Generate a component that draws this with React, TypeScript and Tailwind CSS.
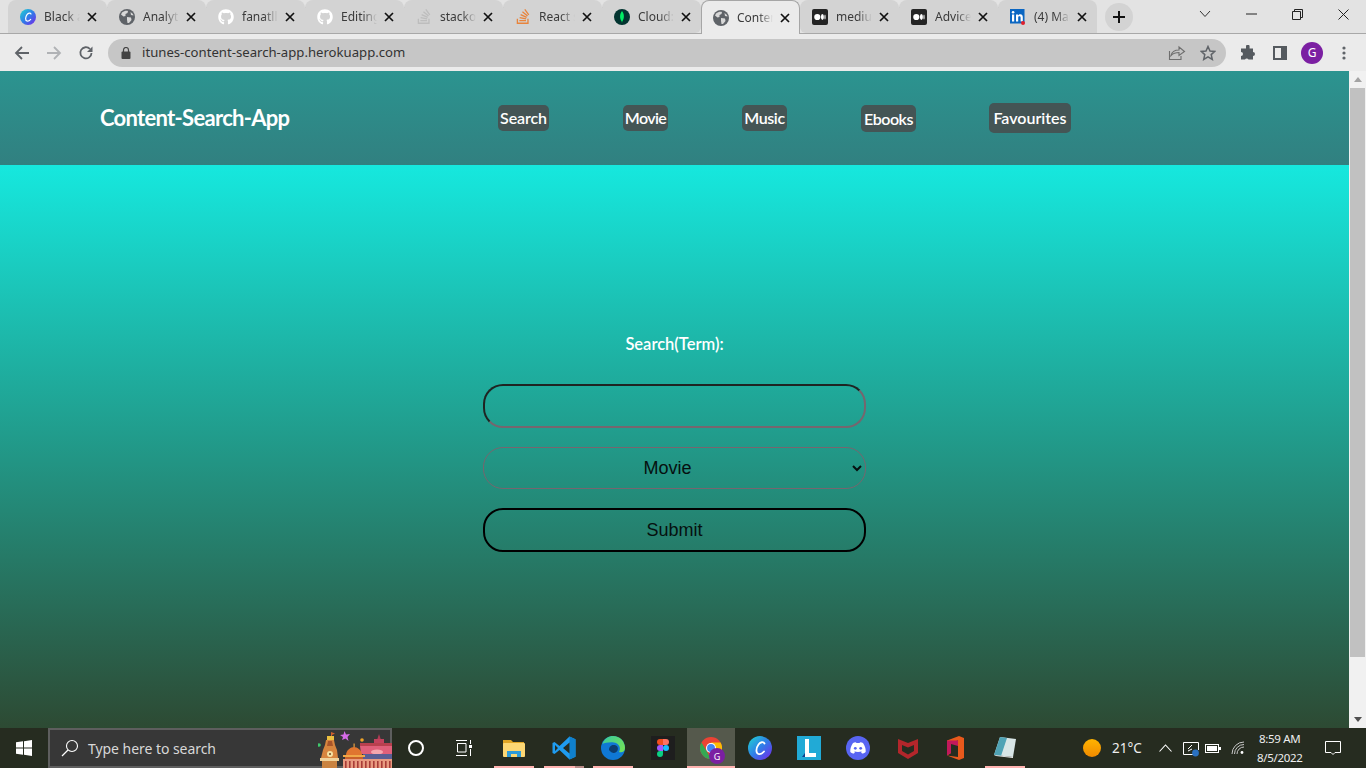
import React from "react";
import { FaGithub, FaStackOverflow } from "react-icons/fa";

const Globe = () => (
  <svg width="16" height="16" viewBox="0 0 16 16">
    <circle cx="8" cy="8" r="8" fill="#5f6368" />
    <path d="M3 3.5 C5 2 7 1.5 9 2 L8.5 4 L6.5 5 L6.5 7 L4.5 7.5 L2 5.5 Z" fill="#d8d8d8" />
    <path d="M8 8 L12 8.5 L12.5 11 L10 14 L8.5 14 L8 11 Z" fill="#d8d8d8" />
    <path d="M11.5 3 L14 5 L14.5 6.5 L12 6 Z" fill="#d8d8d8" />
  </svg>
);

const Canva = ({ size = 16, id = "cv" }: { size?: number; id?: string }) => (
  <svg width={size} height={size} viewBox="0 0 24 24">
    <defs>
      <linearGradient id={id} x1="0" y1="0" x2="1" y2="1">
        <stop offset="0" stopColor="#1fd8d0" />
        <stop offset="0.5" stopColor="#2f7de8" />
        <stop offset="1" stopColor="#7a22e8" />
      </linearGradient>
    </defs>
    <circle cx="12" cy="12" r="12" fill={`url(#${id})`} />
    <path d="M16.5 7.5 C15.5 5.5 12.5 5.8 10.5 8.5 C8 12 7.5 17 10.5 18 C12.5 18.6 14.5 17.2 16 15.5" fill="none" stroke="#fff" strokeWidth="1.8" strokeLinecap="round" />
  </svg>
);

const Github = () => <FaGithub size={16} color="#ffffff" />;
const So = ({ c }: { c: string }) => <FaStackOverflow size={17} color={c} />;

const Mongo = () => (
  <svg width="16" height="16" viewBox="0 0 16 16">
    <circle cx="8" cy="8" r="8" fill="#023430" />
    <path d="M8 2 C10.5 5 10.5 9.5 8.3 12.5 L8 14 L7.7 12.5 C5.5 9.5 5.5 5 8 2 Z" fill="#00ed64" />
  </svg>
);

const Medium = () => (
  <svg width="16" height="16" viewBox="0 0 16 16">
    <rect width="16" height="16" rx="2" fill="#242424" />
    <circle cx="5.3" cy="8" r="3.1" fill="#fff" />
    <ellipse cx="10.4" cy="8" rx="1.5" ry="2.9" fill="#fff" />
    <ellipse cx="13" cy="8" rx="0.6" ry="2.6" fill="#fff" />
  </svg>
);

const Linked = () => (
  <svg width="16" height="16" viewBox="0 0 16 16">
    <rect width="14.5" height="14.5" fill="#0a66c2" />
    <rect x="2" y="5.5" width="2.2" height="7" fill="#fff" />
    <circle cx="3.1" cy="3.2" r="1.3" fill="#fff" />
    <path d="M6 5.5 H8 V6.5 C8.5 5.6 9.4 5.3 10.3 5.3 C12 5.3 12.8 6.4 12.8 8.2 V12.5 H10.6 V8.7 C10.6 7.8 10.2 7.3 9.4 7.3 C8.7 7.3 8.2 7.8 8.2 8.7 V12.5 H6 Z" fill="#fff" />
    <circle cx="13" cy="14" r="2" fill="#e0202c" />
  </svg>
);

const tabs = [
  { icon: <Canva />, text: "Black and", sep: true },
  { icon: <Globe />, text: "Analytics", sep: true },
  { icon: <Github />, text: "fanatllll", sep: true },
  { icon: <Github />, text: "Editing", sep: true },
  { icon: <So c="#bdbdbd" />, text: "stackover", sep: true },
  { icon: <So c="#e8843c" />, text: "React st", sep: true },
  { icon: <Mongo />, text: "Cloud:", sep: false, br: true },
  { icon: <Globe />, text: "Content", sep: false, active: true },
  { icon: <Medium />, text: "medium", sep: true, bl: true },
  { icon: <Medium />, text: "Advice", sep: true },
  { icon: <Linked />, text: "(4) Mail", sep: false },
];

const CloseX = () => (
  <svg width="10" height="10" viewBox="0 0 10 10" className="shrink-0">
    <path d="M1 1 L9 9 M9 1 L1 9" stroke="#111" strokeWidth="1.7" />
  </svg>
);

function Tab({ t }: { t: (typeof tabs)[number] }) {
  return (
    <div
      className={
        "relative flex w-[99px] shrink-0 items-center rounded-t-[8px] " +
        (t.active
          ? "h-[34px] -mb-px self-start bg-[#ebebeb] border border-b-0 border-[#a6a6a6] pl-[11px] z-10 "
          : "h-[33px] bg-[#d3d3d3] pl-[12px] ") +
        (t.br ? "rounded-br-[6px] " : "") +
        (t.bl ? "rounded-bl-[6px] " : "")
      }
    >
      <span className="flex h-[17px] w-[16px] shrink-0 items-center justify-center">{t.icon}</span>
      <span className="ml-[8px] w-[36px] overflow-hidden whitespace-nowrap text-[12px] text-[#3a3a3a] [mask-image:linear-gradient(to_right,black_60%,transparent)]">
        {t.text}
      </span>
      <span className="ml-[7px] flex">
        <CloseX />
      </span>
      {t.sep && <span className="absolute right-[-1px] top-[7px] h-[20px] w-px bg-[#8c8c8c]" />}
    </div>
  );
}

function TabStrip() {
  return (
    <div className="flex h-[34px] shrink-0 items-start border-b border-[#a8a8a8] bg-[#e3e3e3] pl-[8px]">
      {tabs.map((t) => (
        <Tab key={t.text} t={t} />
      ))}
      <div className="ml-[8px] mt-[3px] flex h-[28px] w-[28px] items-center justify-center rounded-full bg-[#d3d3d3]">
        <svg width="14" height="14" viewBox="0 0 14 14">
          <path d="M7 1 V13 M1 7 H13" stroke="#111" strokeWidth="2" />
        </svg>
      </div>
      <div className="ml-auto flex h-[28px] items-center">
        <span className="flex w-[46px] justify-center">
          <svg width="12" height="8" viewBox="0 0 12 8"><path d="M1 1 L6 6.5 L11 1" fill="none" stroke="#333" /></svg>
        </span>
        <span className="flex w-[46px] justify-center">
          <svg width="11" height="2" viewBox="0 0 11 2"><path d="M0 1 H11" stroke="#222" /></svg>
        </span>
        <span className="flex w-[46px] justify-center">
          <svg width="11" height="11" viewBox="0 0 11 11"><path d="M.5 2.5 H8.5 V10.5 H.5 Z M2.5 2.5 V.5 H10.5 V8.5 H8.5" fill="none" stroke="#222" /></svg>
        </span>
        <span className="flex w-[46px] justify-center">
          <svg width="11" height="11" viewBox="0 0 11 11"><path d="M.5 .5 L10.5 10.5 M10.5 .5 L.5 10.5" stroke="#222" /></svg>
        </span>
      </div>
    </div>
  );
}

function Toolbar() {
  return (
    <div className="flex h-[37px] shrink-0 items-center bg-[#ebebeb]">
      <div className="flex w-[108px] items-center pl-[14px]">
        <svg width="16" height="16" viewBox="0 0 16 16" className="mr-[16px]">
          <path d="M15 8 H2 M8 2 L2 8 L8 14" fill="none" stroke="#5f6368" strokeWidth="1.8" />
        </svg>
        <svg width="16" height="16" viewBox="0 0 16 16" className="mr-[16px]">
          <path d="M1 8 H14 M8 2 L14 8 L8 14" fill="none" stroke="#b0b2b5" strokeWidth="1.8" />
        </svg>
        <svg width="16" height="16" viewBox="0 0 16 16">
          <path d="M13.5 8 A5.6 5.6 0 1 1 12 4" fill="none" stroke="#5f6368" strokeWidth="1.8" />
          <path d="M14.5 1.5 V7 H9 Z" fill="#5f6368" />
        </svg>
      </div>
      <div className="flex h-[28px] w-[1118px] items-center rounded-full bg-[#c6c6c6] pl-[13px] pr-[10px]">
        <svg width="10" height="12" viewBox="0 0 10 12" className="shrink-0">
          <rect x="0.5" y="4.5" width="9" height="7.5" rx="1" fill="#444" />
          <path d="M2.5 5 V3 A2.5 2.5 0 0 1 7.5 3 V5" fill="none" stroke="#444" strokeWidth="1.2" />
        </svg>
        <span className="ml-[11px] text-[13.15px] text-[#333]">itunes-content-search-app.herokuapp.com</span>
        <svg width="18" height="16" viewBox="0 0 18 16" className="ml-auto mr-[14px]">
          <path d="M1.5 6 V14.5 H13 V11 M3 10.5 C4 6.5 7 5 11 5 V2 L16.5 6.5 L11 10.5 V7.5 C7.5 7.5 5 8.5 3 10.5 Z" fill="none" stroke="#6e6e6e" strokeWidth="1.1" />
        </svg>
        <svg width="16" height="16" viewBox="0 0 16 16">
          <path d="M8 1.5 L10 6 L14.8 6.4 L11.2 9.6 L12.3 14.4 L8 11.9 L3.7 14.4 L4.8 9.6 L1.2 6.4 L6 6 Z" fill="none" stroke="#5f6368" strokeWidth="1.5" />
        </svg>
      </div>
      <div className="flex items-center pl-[14px]">
        <svg width="16" height="16" viewBox="0 0 16 16" className="mr-[17px]">
          <path d="M6 1.5 A1.8 1.8 0 0 1 9.6 1.5 V3.5 H13 V7 A2 2 0 0 1 13 11 V14.5 H8.5 A2 2 0 0 0 5 14.5 H1 V11 A2 2 0 0 0 1 7 V3.5 H6 Z" fill="#555a5f" />
        </svg>
        <svg width="14" height="14" viewBox="0 0 14 14" className="mr-[14px]">
          <rect x="1" y="1" width="12" height="12" fill="none" stroke="#555a5f" strokeWidth="2" />
          <rect x="8" y="1" width="5" height="12" fill="#555a5f" />
        </svg>
        <span className="flex h-[22px] w-[22px] items-center justify-center rounded-full bg-[#7b1fa2] text-[12px] text-white">G</span>
        <svg width="4" height="14" viewBox="0 0 4 14" className="ml-[19px]">
          <circle cx="2" cy="2" r="1.6" fill="#5f6368" />
          <circle cx="2" cy="7" r="1.6" fill="#5f6368" />
          <circle cx="2" cy="12" r="1.6" fill="#5f6368" />
        </svg>
      </div>
    </div>
  );
}

const navBtn =
  "flex items-center justify-center rounded-[5px] bg-[#445555] text-[16px] font-semibold leading-none text-white [font-family:Lato,sans-serif]";

function Page() {
  return (
    <div className="flex min-w-0 flex-1 flex-col">
      <header className="flex h-[94px] shrink-0 items-center bg-[linear-gradient(180deg,#2b9490,#318080)] pl-[100px]">
        <div className="-mt-[2px] w-[398px] shrink-0 text-[22px] font-bold tracking-[-0.7px] text-white [font-family:Lato,sans-serif]">
          Content-Search-App
        </div>
        <nav className="flex items-center gap-[74px]">
          <a className={navBtn + " h-[26px] w-[51px] tracking-[-0.1px]"}>Search</a>
          <a className={navBtn + " h-[26px] w-[45px] tracking-[-0.6px]"}>Movie</a>
          <a className={navBtn + " h-[26px] w-[45px] tracking-[-0.4px]"}>Music</a>
          <a className={navBtn + " mt-px h-[27px] w-[55px] tracking-[-0.5px]"}>Ebooks</a>
          <a className={navBtn + " -ml-px h-[30px] w-[82px]"}>Favourites</a>
        </nav>
      </header>
      <main className="flex flex-1 flex-col items-center bg-[linear-gradient(180deg,#16e8de,#2d4a33)] pt-[169px]">
        <label className="h-[20px] text-[16.5px] font-semibold leading-[20px] text-white [font-family:Lato,sans-serif]">
          Search(Term):
        </label>
        <form className="mt-[30px] flex w-[383px] flex-col [font-family:'Liberation_Sans',sans-serif]">
          <input
            type="text"
            className="h-[44px] w-full rounded-[20px] border-2 border-t-[#1f2422] border-l-[#1f2422] border-r-[#76666e] border-b-[#76666e] bg-transparent text-center text-[18px] text-black outline-none"
          />
          <select
            defaultValue="Movie"
            className="mt-[19px] h-[42px] w-full rounded-[20px] border border-[#76666e] bg-transparent pr-[2px] text-center text-[18px] text-[#06100f] outline-none"
          >
            <option>Movie</option>
            <option>Music</option>
            <option>Ebooks</option>
          </select>
          <button
            type="button"
            className="mt-[19px] h-[44px] w-full rounded-[20px] border-2 border-black bg-transparent text-[18px] text-[#06100f]"
          >
            Submit
          </button>
        </form>
      </main>
    </div>
  );
}

function Scrollbar() {
  return (
    <div className="flex w-[17px] shrink-0 flex-col items-center bg-[#f1f1f1]">
      <div className="flex h-[17px] w-full items-center justify-center">
        <svg width="8" height="5" viewBox="0 0 8 5"><path d="M4 0 L8 5 H0 Z" fill="#a3a3a3" /></svg>
      </div>
      <div className="h-[569px] w-[15px] bg-[#c1c1c1]" />
      <div className="mt-auto flex h-[17px] w-full items-center justify-center">
        <svg width="8" height="5" viewBox="0 0 8 5"><path d="M0 0 H8 L4 5 Z" fill="#505050" /></svg>
      </div>
    </div>
  );
}

const stripes = [27, 31, 35, 39, 43, 47, 51, 55, 59, 63, 67, 71];

const Art = () => (
  <svg width="74" height="38" viewBox="0 0 74 38" className="-mr-[2px] -mb-[2px] shrink-0">
    {/* clock tower */}
    <path d="M13 2 L17 3.5 L14 5 V8 H13 Z" fill="#d0602c" />
    <rect x="9" y="6" width="7" height="4" fill="#ecc040" />
    <path d="M8 10 H16 L17 15 L19 20 L20 28 H3 L5 20 L7 15 Z" fill="#d8853e" />
    <path d="M10 11 H14 L15 16 H9 Z" fill="#a9552a" />
    <circle cx="12" cy="24" r="3" fill="#f5e2a4" />
    <circle cx="12" cy="24" r="1" fill="#6e4320" />
    <rect x="2" y="28" width="19" height="3" fill="#f0d29a" />
    <rect x="4" y="31" width="15" height="7" fill="#c98341" />
    {/* right palace */}
    <path d="M61 4 L63 10 H59 Z" fill="#b03a55" />
    <rect x="56" y="9" width="10" height="4" fill="#c2425c" />
    <rect x="42" y="13" width="32" height="3" fill="#b8404e" />
    <path d="M42 16 H74 V24 H43 Z" fill="#e0607a" />
    <ellipse cx="59" cy="22" rx="6" ry="2.6" fill="#f5a6ae" />
    <rect x="45" y="24" width="29" height="5" fill="#5a5e94" />
    {/* dome */}
    <rect x="35.5" y="13.5" width="1.2" height="4" fill="#e8a040" />
    <path d="M28 25 C28 20 33 17 36 17 C39 17 44 20 44 25 Z" fill="#e0752f" />
    <rect x="25" y="25" width="22" height="2" fill="#f0a848" />
    <rect x="27" y="27" width="18" height="2" fill="#c9602a" />
    {/* colonnade */}
    <rect x="25" y="29" width="49" height="9" fill="#e89a80" />
    {stripes.map((x) => (
      <rect key={x} x={x} y="31" width="1.6" height="7" fill="#a83c38" />
    ))}
    {/* star + dots */}
    <path d="M26.5 1 L28 4.5 L32 4 L29.5 7 L30.5 11 L27.5 8.5 L24 10 L25 7 L22 5 L25.5 4.5 Z" fill="#d66be8" />
    <circle cx="1" cy="15" r="1.8" fill="#3ecb6d" />
    <circle cx="44" cy="10" r="1.8" fill="#efa428" />
  </svg>
);

const Win = () => (
  <svg width="16" height="16" viewBox="0 0 16 16">
    <path d="M0 2.3 L7 1.3 V7.5 H0 Z M8 1.2 L16 0 V7.5 H8 Z M0 8.5 H7 V14.7 L0 13.7 Z M8 8.5 H16 V16 L8 14.8 Z" fill="#fff" />
  </svg>
);

const TB = ({ w = 49, children, active, under, under2 }: { w?: number; children: React.ReactNode; active?: boolean; under?: string; under2?: boolean }) => (
  <div className={"relative flex h-[40px] shrink-0 items-center justify-center " + (active ? "bg-[#55594c]" : "")} style={{ width: w }}>
    {children}
    {under && (
      <span className="absolute bottom-0 left-0 right-0 flex h-[2px] justify-center">
        <span className={"h-full bg-[#ffb3b0] " + under} />
        {under2 && <span className="h-full w-[9px] bg-[#b88c88]" />}
      </span>
    )}
  </div>
);

function Taskbar() {
  return (
    <div className="flex h-[40px] shrink-0 items-center bg-[#262c20] text-white [font-family:'Noto_Sans',sans-serif]">
      <div className="flex h-full w-[48px] shrink-0 items-center justify-center">
        <Win />
      </div>
      <div className="flex h-full w-[344px] shrink-0 items-end border-2 border-[#5e5e5e] bg-[#373737] pl-[11px]">
        <div className="flex h-full items-center">
          <svg width="18" height="18" viewBox="0 0 18 18" className="shrink-0">
            <circle cx="11" cy="7" r="5.5" fill="none" stroke="#fff" strokeWidth="1.1" />
            <path d="M7 11 L1 17" stroke="#fff" strokeWidth="1.2" />
          </svg>
          <span className="ml-[9px] whitespace-nowrap text-[14px] text-[#d8d8d8] tracking-[-0.05px]">Type here to search</span>
        </div>
        <span className="ml-auto flex"><Art /></span>
      </div>
      <TB w={48}>
        <span className="h-[16px] w-[16px] rounded-full border-2 border-white" />
      </TB>
      <TB w={48}>
        <svg width="18" height="16" viewBox="0 0 18 16">
          <path d="M1 .5 H12 M1 15.5 H12 M2.5 3.5 H11 V12 H2.5 Z" fill="none" stroke="#fff" />
          <path d="M15.5 0 V4 M15.5 9 V16" stroke="#fff" />
          <rect x="14" y="5" width="3" height="3" fill="#fff" />
        </svg>
      </TB>
      <TB w={51} under="w-[40px]">
        <svg width="22" height="18" viewBox="0 0 22 18">
          <path d="M0 1 H8 L10 3 H21 V6 H0 Z" fill="#e0a526" />
          <rect x="0" y="4" width="22" height="14" rx="1" fill="#fcd774" />
          <path d="M4 18 V12 H18 V18 H14 V15 H8 V18 Z" fill="#2e9bd8" />
        </svg>
      </TB>
      <TB w={49} under="w-[31px]" under2>
        <svg width="24" height="24" viewBox="0 0 24 24">
          <path d="M17.5 0.5 L23.5 3.3 V20.7 L17.5 23.5 L7.5 14 L2.5 18 L0.5 17 V7 L2.5 6 L7.5 10 Z" fill="#1f9cf0" />
          <path d="M17.5 0.5 V23.5 L23.5 20.7 V3.3 Z" fill="#0f80cc" />
          <path d="M3 9 L6 12 L3 15 Z M17.5 6.5 L11 12 L17.5 17.5 Z" fill="#262c20" />
        </svg>
      </TB>
      <TB w={50} under="w-[40px]">
        <svg width="24" height="24" viewBox="0 0 24 24">
          <defs>
            <linearGradient id="ed1" x1="0" y1="0" x2="1" y2="0.6">
              <stop offset="0" stopColor="#36c9a0" />
              <stop offset="1" stopColor="#6ee05e" />
            </linearGradient>
          </defs>
          <circle cx="12" cy="12" r="12" fill="#0f78d4" />
          <path d="M1.5 8 C3 2.5 8 0 12 0 C19 0 24 5.5 24 12 C24 16 20.5 17 18 16 C20 13 19 7.5 13 6.5 C8 6 3.5 7 1.5 8 Z" fill="url(#ed1)" />
          <path d="M8 14 C8 10 11 8.5 13.5 9 C16.5 9.5 17.5 12 16.5 14.5 C15 17.5 11 18 8 14 Z" fill="#0c3d6e" />
        </svg>
      </TB>
      <TB w={49}>
        <span className="flex h-[24px] w-[24px] items-center justify-center bg-[#1e1e1e]">
          <svg width="12" height="18" viewBox="0 0 12 18">
            <path d="M6 0 H3 A3 3 0 0 0 3 6 H6 Z" fill="#f24e1e" />
            <path d="M6 0 H9 A3 3 0 0 1 9 6 H6 Z" fill="#ff7262" />
            <path d="M6 6 H3 A3 3 0 0 0 3 12 H6 Z" fill="#a259ff" />
            <circle cx="9" cy="9" r="3" fill="#1abcfe" />
            <path d="M3 12 H6 V15 A3 3 0 1 1 3 12 Z" fill="#0acf83" />
          </svg>
        </span>
      </TB>
      <TB w={48} active under="w-full">
        <span className="relative flex">
          <svg width="22" height="22" viewBox="0 0 24 24">
            <circle cx="12" cy="12" r="12" fill="#ea4335" />
            <path d="M12 24 A12 12 0 0 1 1.6 6 L7 15 Z" fill="#34a853" />
            <path d="M12 6 H22.4 A12 12 0 0 1 12 24 L17 15 Z" fill="#fbbc05" />
            <circle cx="12" cy="12" r="5.5" fill="#fff" />
            <circle cx="12" cy="12" r="4.3" fill="#4285f4" />
          </svg>
          <span className="absolute -bottom-[5px] -right-[3px] flex h-[16px] w-[16px] items-center justify-center rounded-full bg-[#7b1fa2] text-[9px] leading-none text-white">G</span>
        </span>
      </TB>
      <TB w={50}>
        <Canva size={24} id="cv2" />
      </TB>
      <TB w={48}>
        <span className="flex h-[24px] w-[24px] items-center justify-center bg-[#21aad6]">
          <svg width="14" height="18" viewBox="0 0 14 18">
            <path d="M3 0 H7 V14 H14 V18 H3 Z" fill="#fff" />
            <path d="M0 18 L3 14 V18 Z" fill="#0f3f8c" />
          </svg>
        </span>
      </TB>
      <TB w={50}>
        <span className="flex h-[24px] w-[24px] items-center justify-center rounded-full bg-[#5865f2]">
          <svg width="16" height="12" viewBox="0 0 16 12">
            <path d="M3 1 C5 0 6 0 6.5 1 H9.5 C10 0 11 0 13 1 C15 4 16 7 15.7 10 C14.5 11 13 11.5 12 11.5 L11 10 L12 9.3 C9.5 10.3 6.5 10.3 4 9.3 L5 10 L4 11.5 C3 11.5 1.5 11 0.3 10 C0 7 1 4 3 1 Z" fill="#fff" />
            <circle cx="5.3" cy="6.3" r="1.4" fill="#5865f2" />
            <circle cx="10.7" cy="6.3" r="1.4" fill="#5865f2" />
          </svg>
        </span>
      </TB>
      <TB w={49}>
        <svg width="22" height="24" viewBox="0 0 22 24">
          <path d="M1 3 L11 7 L21 3 V17 L11 23 L1 17 Z M5 9 V15 L11 18.5 L17 15 V9 L11 11.5 Z" fill="#b3262b" fillRule="evenodd" />
        </svg>
      </TB>
      <TB w={48}>
        <svg width="20" height="24" viewBox="0 0 20 24">
          <path d="M1 4.5 L13 0 L18 2 V22 L13 24 L1 19.5 L12 21 V4.5 L5 6.5 V17 L1 19.5 Z" fill="#e8591c" />
          <path d="M1 4.5 L12 4.5 V10 L5 8 V17 L1 19.5 Z" fill="#c2185b" />
        </svg>
      </TB>
      <TB w={50} under="w-[40px]">
        <svg width="24" height="24" viewBox="0 0 24 24">
          <path d="M7 1 L23 3 L20 21 L1 19 Z" fill="#d8e6e6" />
          <path d="M7 1 L1 19 L8 20 L14 2 Z" fill="#4fa3b5" />
          <path d="M3 20 L20 22 L20 21 L1 19 Z" fill="#eeeeee" />
        </svg>
      </TB>
      <div className="ml-[53px] flex h-full flex-1 items-center">
        <span className="h-[18px] w-[18px] rounded-full bg-[linear-gradient(180deg,#ffb400,#f08a00)]" />
        <span className="ml-[11px] text-[13.5px] text-[#eeeeee]">21°C</span>
        <svg width="13" height="8" viewBox="0 0 13 8" className="ml-[17px]">
          <path d="M.5 7.5 L6.5 1 L12.5 7.5" fill="none" stroke="#fff" strokeWidth="1.1" />
        </svg>
        <svg width="17" height="17" viewBox="0 0 17 17" className="ml-[11px]">
          <path d="M.5 2.5 H15.5 V10 M12 14.5 H.5 V2.5" fill="none" stroke="#fff" />
          <path d="M5 9 L9 5 M9 9 L5 11" fill="none" stroke="#fff" />
          <circle cx="12.5" cy="13" r="3.4" fill="#2a70c0" />
        </svg>
        <svg width="16" height="9" viewBox="0 0 16 9" className="ml-[5px]">
          <rect x=".5" y=".5" width="13" height="8" fill="none" stroke="#fff" />
          <rect x="2" y="2" width="10" height="5" fill="#fff" />
          <rect x="14" y="3" width="2" height="3" fill="#fff" />
        </svg>
        <svg width="14" height="14" viewBox="0 0 14 14" className="ml-[10px]">
          <path d="M1 13 A12 12 0 0 1 13 1 M3.5 13 A9.5 9.5 0 0 1 13 3.5 M6 13 A7 7 0 0 1 13 6" fill="none" stroke="#c8c8c8" />
          <circle cx="11" cy="11.5" r="1.4" fill="#fff" />
        </svg>
        <div className="ml-[11px] flex w-[48px] flex-col items-center whitespace-nowrap text-[11.5px] leading-[19px] tracking-[-0.3px] text-[#eeeeee]">
          <span>8:59 AM</span>
          <span>8/5/2022</span>
        </div>
        <svg width="16" height="15" viewBox="0 0 16 15" className="ml-[21px]">
          <path d="M.5 .5 H15.5 V11.5 H10 L8 13.5 L6 11.5 H.5 Z" fill="none" stroke="#fff" />
        </svg>
      </div>
    </div>
  );
}

export default function App() {
  return (
    <div className="flex h-[768px] w-[1366px] flex-col overflow-hidden [font-family:'Noto_Sans',sans-serif]">
      <TabStrip />
      <Toolbar />
      <div className="flex min-h-0 flex-1">
        <Page />
        <Scrollbar />
      </div>
      <Taskbar />
    </div>
  );
}
